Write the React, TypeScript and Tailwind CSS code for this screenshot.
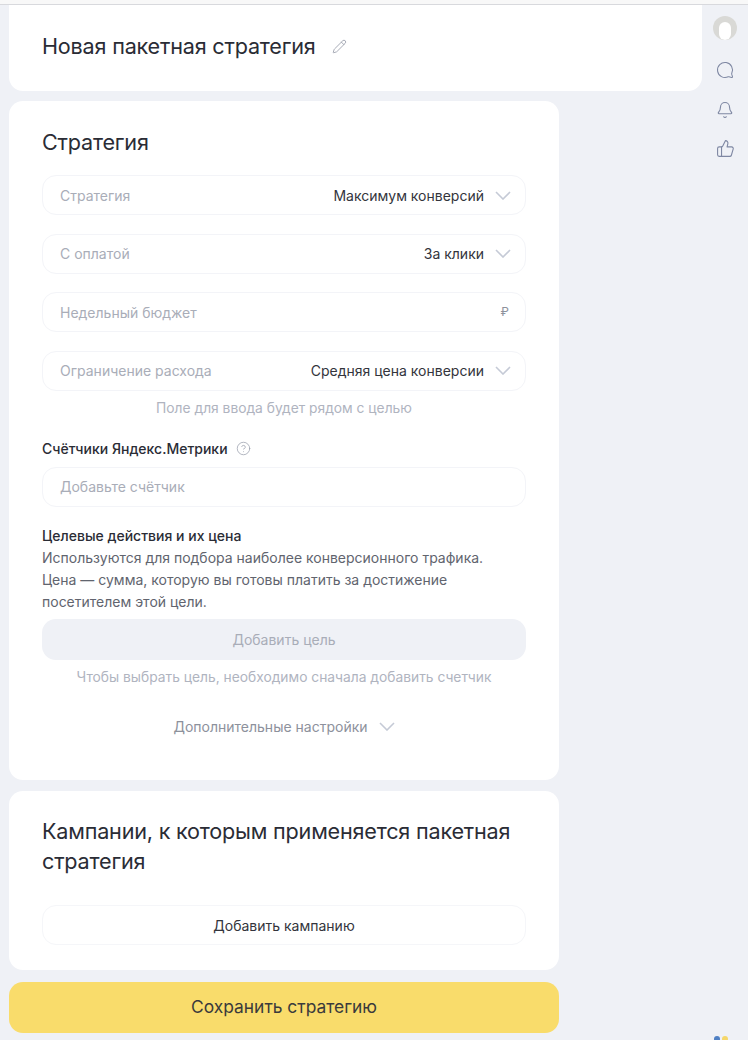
import { Bell, CircleHelp, MessageCircle, Pencil, ThumbsUp } from "lucide-react";

const font = "font-['Inter','Noto_Sans',sans-serif]";

const Chevron = () => (
  <svg width="16" height="9" viewBox="0 0 16 9" fill="none" className="text-[#c5cad6]">
    <path d="M1 1l7 7 7-7" stroke="currentColor" strokeWidth="1.6" />
  </svg>
);

const Field = ({ label, value }: { label: string; value?: string }) => (
  <div className="flex h-10 items-center justify-between rounded-[14px] border border-[#f3f4f8] bg-white pl-[17px] pr-[14px] text-[14px]">
    <span className="text-[#a9adb8]">{label}</span>
    {value && (
      <span className="flex items-center gap-[11px] text-[#33343c]">
        {value}
        <Chevron />
      </span>
    )}
  </div>
);

const App = () => (
  <div className={`${font} flex h-[1040px] w-[748px] flex-col overflow-hidden bg-[#eff1f6] text-[#2a2c35]`}>
    <div className="h-[5px] shrink-0 border-b border-[#d8d9dd] bg-[#f8f8f8]" />

    <div className="flex h-[86px] shrink-0">
      <div className="ml-[9px] flex h-[86px] w-[693px] items-center gap-[16px] rounded-b-[14px] bg-white pb-[3px] pl-[33px]">
        <h1 className="text-[21.6px] tracking-[-0.2px]">Новая пакетная стратегия</h1>
        <Pencil size={15} strokeWidth={1.4} className="text-[#9a9fac]" />
      </div>
      <aside className="flex h-[170px] w-[46px] flex-col items-center gap-[18px] pt-[11px] text-[#7f88a3]">
        <div className="flex h-6 w-6 items-end justify-center overflow-hidden rounded-full bg-[#d9d9d6]">
          <div className="h-[18px] w-3 rounded-full bg-white" />
        </div>
        <MessageCircle size={18} strokeWidth={1.4} className="mt-[3px] -scale-x-100" />
        <Bell size={18} strokeWidth={1.5} className="mt-[4px]" />
        <ThumbsUp size={19} strokeWidth={1.4} className="mt-[2px]" />
      </aside>
    </div>

    <section className="ml-[9px] mt-[10px] flex h-[679px] w-[550px] shrink-0 flex-col rounded-[14px] bg-white px-[33px] pt-[27px]">
      <h2 className="text-[21.6px] leading-7 tracking-[-0.2px]">Стратегия</h2>
      <div className="mt-[19px] flex flex-col gap-[18.6px]">
        <Field label="Стратегия" value="Максимум конверсий" />
        <Field label="С оплатой" value="За клики" />
        <div className="flex h-10 items-center justify-between rounded-[14px] border border-[#f3f4f8] pl-[17px] pr-[16px] text-[14px] text-[#a9adb8]">
          <span>Недельный бюджет</span>
          <span className="text-[12px] text-[#8d919c]">₽</span>
        </div>
        <Field label="Ограничение расхода" value="Средняя цена конверсии" />
      </div>
      <p className="mt-[9px] text-center text-[13.8px] leading-4 text-[#b0b4bf]">Поле для ввода будет рядом с целью</p>

      <div className="mt-[25px] flex items-center gap-[8px] text-[14px] font-medium leading-4">
        Счётчики Яндекс.Метрики
        <CircleHelp size={15} strokeWidth={1.2} className="text-[#9a9fac]" />
      </div>
      <div className="mt-[10px] flex h-10 items-center rounded-[14px] border border-[#f3f4f8] pl-[17px] text-[14px] text-[#a9adb8]">
        Добавьте счётчик
      </div>

      <p className="mt-[18px] text-[14px] font-medium leading-[22px]">Целевые действия и их цена</p>
      <p className="text-[14px] leading-[22px] text-[#61646e]">
        Используются для подбора наиболее конверсионного трафика.
        <br />
        Цена — сумма, которую вы готовы платить за достижение
        <br />
        посетителем этой цели.
      </p>
      <div className="mt-[6px] flex h-[41px] items-center justify-center rounded-[14px] bg-[#eff1f6] text-[14px] text-[#a9adb8]">
        Добавить цель
      </div>
      <p className="mt-[9px] text-center text-[13.8px] leading-4 text-[#b0b4bf]">
        Чтобы выбрать цель, необходимо сначала добавить счетчик
      </p>
      <div className="mt-[31px] flex items-center justify-center gap-[11px] text-[14px] text-[#8d919c]">
        Дополнительные настройки
        <Chevron />
      </div>
    </section>

    <section className="ml-[9px] mt-[11px] h-[179px] w-[550px] shrink-0 rounded-[14px] bg-white px-[33px] pt-[25px]">
      <h2 className="text-[21.6px] leading-[30px] tracking-[-0.2px]">
        Кампании, к которым применяется пакетная стратегия
      </h2>
      <div className="mt-[29px] flex h-10 items-center justify-center rounded-[14px] border border-[#f5f6f9] text-[14px] text-[#33343c]">
        Добавить кампанию
      </div>
    </section>

    <button className="ml-[9px] mt-[12px] h-[51px] w-[550px] shrink-0 rounded-[14px] bg-[#f9dc6b] text-[17.4px] text-[#3a3a3c]">
      Сохранить стратегию
    </button>

    <div className="ml-[714px] mt-[3px] flex gap-[2px]">
      <span className="h-[6px] w-[6px] rounded-full bg-[#4f80c4]" />
      <span className="h-[6px] w-[6px] rounded-full bg-[#f5d76a]" />
    </div>
  </div>
);

export default App;
